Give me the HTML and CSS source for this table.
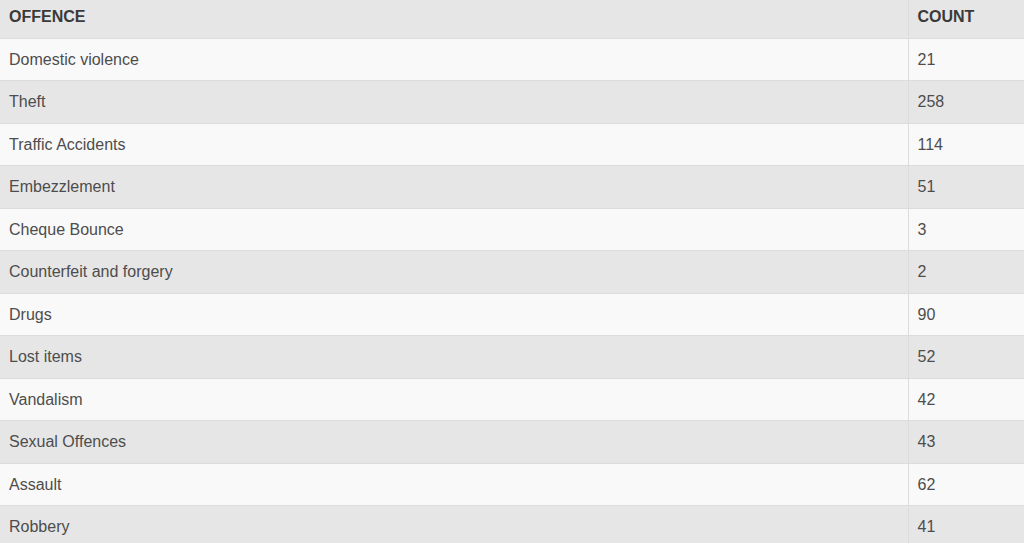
FILE: index.html
```html
<!doctype html>
<html lang="en">
<head>
<title>Offences</title>
<meta name="viewport" content="width=device-width, initial-scale=1">
<link rel="stylesheet" href="styles.css">
</head>
<body>
<table class="offences">
<thead>
<tr><th>Offence</th><th class="count">Count</th></tr>
</thead>
<tbody>
<tr><td>Domestic violence</td><td>21</td></tr>
<tr><td>Theft</td><td>258</td></tr>
<tr><td>Traffic Accidents</td><td>114</td></tr>
<tr><td>Embezzlement</td><td>51</td></tr>
<tr><td>Cheque Bounce</td><td>3</td></tr>
<tr><td>Counterfeit and forgery</td><td>2</td></tr>
<tr><td>Drugs</td><td>90</td></tr>
<tr><td>Lost items</td><td>52</td></tr>
<tr><td>Vandalism</td><td>42</td></tr>
<tr><td>Sexual Offences</td><td>43</td></tr>
<tr><td>Assault</td><td>62</td></tr>
<tr><td>Robbery</td><td>41</td></tr>
</tbody>
</table>
</body>
</html>
```

FILE: styles.css
```css
* { box-sizing:border-box; margin:0; }
body { font-family:'Liberation Sans', Arial, sans-serif; font-size:16px; color:#4d4d4d; background:#fff; }
.offences { width:100%; border-collapse:collapse; }
.offences th, .offences td { text-align:left; padding:10px 9px; line-height:21.5px; border:1px solid #dcdcdc; border-top:none; }
.offences th:first-child, .offences td:first-child { border-left:none; }
.offences th:last-child, .offences td:last-child { border-right:none; }
.offences th { background:#e6e6e6; color:#3a3a3a; font-weight:bold; text-transform:uppercase; padding:6px 9px 10px; }
.offences .count { width:116px; }
.offences tbody tr:nth-child(odd) td { background:#f9f9f9; }
.offences tbody tr:nth-child(even) td { background:#e6e6e6; }
```
